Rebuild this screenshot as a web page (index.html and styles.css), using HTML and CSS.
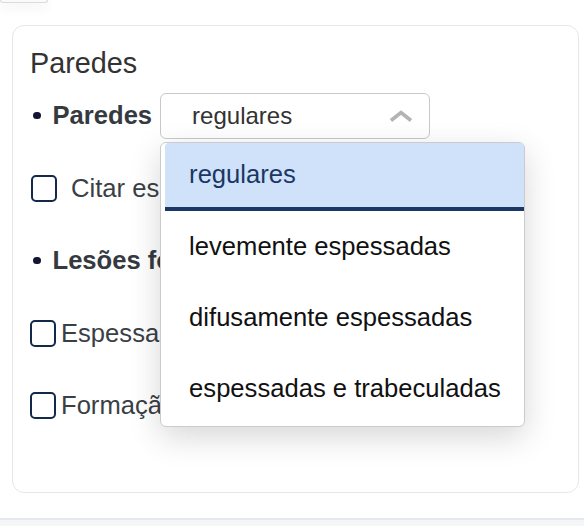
FILE: index.html
```html
<!DOCTYPE html>
<html lang="pt">
<head>
<meta charset="utf-8">
<title>Paredes</title>
<link rel="stylesheet" href="styles.css">
</head>
<body>
<div class="top-stub"></div>
<section class="card">
  <h2 class="card-title">Paredes</h2>
  <div class="row">
    <span class="bullet"></span>
    <span class="label-bold">Paredes</span>
    <div class="select-wrap">
      <div class="select">
        <span class="select-value">regulares</span>
        <svg class="chevron" width="24" height="12" viewBox="0 0 24 12"><path d="M2 10.5 L12 2.5 L22 10.5" fill="none" stroke="#b3b3b3" stroke-width="3.6" stroke-linejoin="miter"/></svg>
      </div>
      <ul class="menu">
        <li class="menu-item active">regulares</li>
        <li class="menu-item">levemente espessadas</li>
        <li class="menu-item">difusamente espessadas</li>
        <li class="menu-item">espessadas e trabeculadas</li>
      </ul>
    </div>
  </div>
  <div class="row">
    <span class="checkbox cb-first"></span>
    <span class="label wide">Citar espessura</span>
  </div>
  <div class="row">
    <span class="bullet"></span>
    <span class="label-bold">Lesões focais</span>
  </div>
  <div class="row">
    <span class="checkbox"></span>
    <span class="label tight">Espessamento focal</span>
  </div>
  <div class="row">
    <span class="checkbox"></span>
    <span class="label tight">Formação vegetante</span>
  </div>
</section>
<div class="bottom-bar"></div>
</body>
</html>
```

FILE: styles.css
```css
* { box-sizing: border-box; }
html, body { margin: 0; padding: 0; background: #ffffff; }
body {
  font-family: "Liberation Sans", Arial, sans-serif;
  color: #343a40;
  width: 584px;
  height: 526px;
  overflow: hidden;
}
.top-stub {
  width: 48px;
  height: 3px;
  border: 1px solid #dcdcdc;
  border-top: none;
  border-radius: 0 0 4px 4px;
  box-shadow: 0 3px 12px rgba(0,0,0,0.12);
  background: #fafafa;
}
.card {
  margin: 22px 5px 0 12px;
  height: 468px;
  border: 1.5px solid #e3e8ef;
  border-radius: 12px;
  padding: 21px 16px 0 17px;
  display: flex;
  flex-direction: column;
  gap: 26.5px;
}
.card-title {
  margin: 0 0 -14px 0;
  font-size: 28.8px;
  font-weight: 400;
  line-height: 33px;
  color: #333;
}
.row {
  height: 46px;
  display: flex;
  align-items: center;
  font-size: 25.6px;
  white-space: nowrap;
}
.bullet {
  width: 7.5px;
  height: 7.5px;
  border-radius: 50%;
  background: #141433;
  margin: 0 12px 0 3px;
  flex: none;
}
.label-bold { font-weight: 700; color: #343a40; }
.label { color: #3a3f45; }
.label.wide { margin-left: 14px; }
.label.tight { margin-left: 5px; }
.checkbox {
  width: 26px;
  height: 27px;
  border: 2px solid #14284a;
  border-radius: 5px;
  flex: none;
}
.cb-first { margin-left: 1px; }
.select-wrap {
  position: relative;
  margin-left: 8px;
  z-index: 2;
}
.select {
  width: 270px;
  height: 46px;
  border: 1.5px solid #c9c9c9;
  border-radius: 6px;
  display: flex;
  align-items: center;
  justify-content: space-between;
  padding: 0 16px 0 31px;
  background: #fff;
}
.select-value { font-size: 24px; color: #333; }
.chevron { display: block; margin-top: 0; }
.menu {
  position: absolute;
  left: 0;
  top: 49px;
  width: 365px;
  margin: 0;
  padding: 0 0 2px 4px;
  list-style: none;
  background: #fff;
  border: 1.5px solid #cbcbcb;
  border-radius: 6px;
  box-shadow: 0 10px 32px rgba(0,0,0,0.16);
}
.menu-item {
  height: 71px;
  display: flex;
  align-items: center;
  padding-left: 24px;
  font-size: 25.6px;
  color: #111;
}
.menu-item.active {
  height: 68px;
  background: #cfe2fa;
  border-bottom: 4px solid #1b3765;
  color: #1b3765;
  border-radius: 4px 4px 0 0;
}
.bottom-bar {
  margin-top: 25px;
  height: 8px;
  border-top: 2px solid #e4e8ed;
  background: #f5f6f8;
}
```
